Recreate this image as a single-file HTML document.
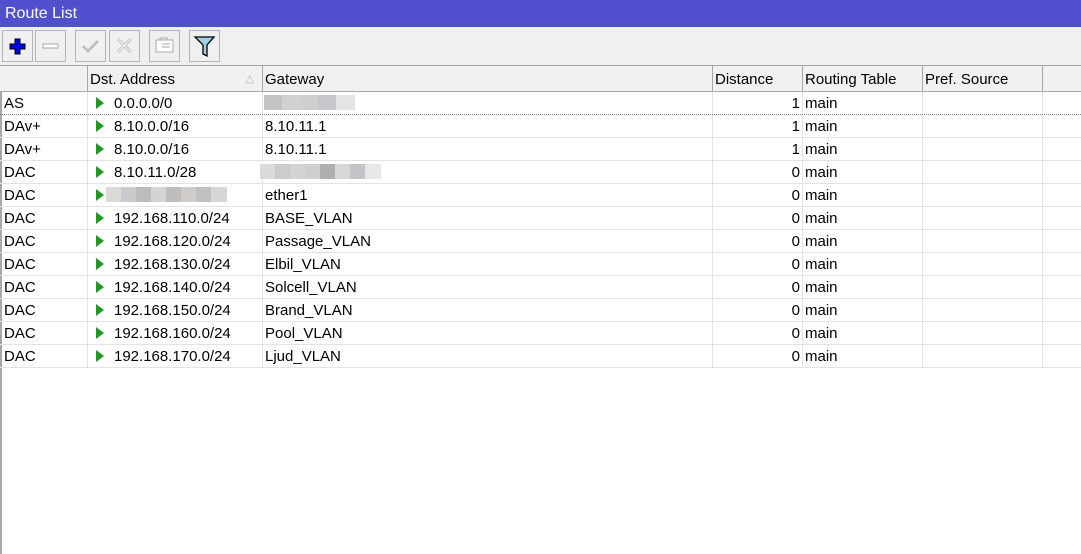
<!DOCTYPE html>
<html><head><meta charset="utf-8"><style>
*{margin:0;padding:0;box-sizing:border-box}
body{width:1081px;height:554px;overflow:hidden;background:#fff;font-family:"Liberation Sans",Arial,sans-serif;font-size:15px;color:#000;position:relative}
.a{position:absolute}
#title{left:0;top:0;width:1081px;height:27px;background:#5050cf;color:#fff;font-size:16px;line-height:27px;padding-left:5px}
#tb{left:0;top:27px;width:1081px;height:38px;background:#f0f0f0}
.btn{position:absolute;top:3px;width:31px;height:32px;border:1px solid #b4b4b4;background:#f0f0f0}
#hdr{left:0;top:65px;width:1081px;height:27px;background:#f0f0f0;border-top:1px solid #a8a8a8;border-bottom:1px solid #a8a8a8}
.hc{position:absolute;top:0;height:25px;line-height:27px;border-right:1px solid #a8a8a8;padding-left:2px}
.row{position:absolute;left:0;width:1081px;height:23px;border-bottom:1px solid #e3e3e3}
.c{position:absolute;top:0;height:22px;line-height:23px;border-right:1px solid #e3e3e3;padding-left:2px;white-space:nowrap}
.tri{position:absolute;left:8px;top:5px;width:0;height:0;border-left:8px solid #1f9a1f;border-top:6px solid transparent;border-bottom:6px solid transparent}
.blur{position:absolute;top:3px;height:15px}
</style></head><body>
<div class="a" id="title">Route List</div>
<div class="a" id="tb">
 <div class="btn" style="left:2px"><svg width="29" height="30"><path d="M12 8h5v5h5v5h-5v5h-5v-5h-5v-5h5z" fill="#0000ee" stroke="#000" stroke-width="1"/></svg></div>
 <div class="btn" style="left:35px"><svg width="29" height="30"><rect x="7" y="13" width="15" height="4" fill="#fff" stroke="#aaa"/></svg></div>
 <div class="btn" style="left:75px"><svg width="29" height="30"><path d="M7 15l5 5 10-10" fill="none" stroke="#bbb" stroke-width="2.5"/></svg></div>
 <div class="btn" style="left:109px"><svg width="29" height="30"><path d="M8 8l13 13M21 8L8 21" stroke="#bbb" stroke-width="3"/><path d="M8 8l13 13M21 8L8 21" stroke="#fff" stroke-width="1"/></svg></div>
 <div class="btn" style="left:149px"><svg width="29" height="30"><rect x="6" y="9" width="17" height="12" fill="#fff" stroke="#aaa"/><path d="M10 9v-2h7v2M12 13h8M12 16h8" stroke="#aaa" fill="none"/></svg></div>
 <div class="btn" style="left:189px"><svg width="29" height="30"><path d="M5 6h19l-7 8v11l-4-2v-9z" fill="#9fd0e8" stroke="#000" stroke-width="1.3"/></svg></div>
</div>
<div class="a" id="hdr">
 <div class="hc" style="left:0;width:88px"></div>
 <div class="hc" style="left:88px;width:175px">Dst. Address<span style="position:absolute;right:8px;top:0;color:#bbb;font-size:11px">△</span></div>
 <div class="hc" style="left:263px;width:450px">Gateway</div>
 <div class="hc" style="left:713px;width:90px">Distance</div>
 <div class="hc" style="left:803px;width:120px">Routing Table</div>
 <div class="hc" style="left:923px;width:120px">Pref. Source</div>
</div>
<div class="a" style="left:0;top:92px;width:2px;height:462px;background:#a8a8a8"></div>
<div id="rows"></div>
<script>
var d=[["AS","0.0.0.0/0","#B1","1"],["DAv+","8.10.0.0/16","8.10.11.1","1"],["DAv+","8.10.0.0/16","8.10.11.1","1"],["DAC","8.10.11.0/28","#B2","0"],["DAC","#B3","ether1","0"],
["DAC","192.168.110.0/24","BASE_VLAN","0"],["DAC","192.168.120.0/24","Passage_VLAN","0"],["DAC","192.168.130.0/24","Elbil_VLAN","0"],["DAC","192.168.140.0/24","Solcell_VLAN","0"],["DAC","192.168.150.0/24","Brand_VLAN","0"],["DAC","192.168.160.0/24","Pool_VLAN","0"],["DAC","192.168.170.0/24","Ljud_VLAN","0"]];
function blur(x,w,cols){var s="",n=cols.length,bw=w/n;for(var i=0;i<n;i++)s+='<div class="blur" style="left:'+(x+i*bw)+'px;width:'+(bw+0.5)+'px;background:'+cols[i]+'"></div>';return s}
var h="";
d.forEach(function(r,i){
 var top=92+i*23;
 var st=i==0?'border-bottom:1px dotted #888;':'';
 h+='<div class="row" style="top:'+top+'px;'+st+'">';
 h+='<div class="c" style="left:2px;width:86px">'+r[0]+'</div>';
 h+='<div class="c" style="left:88px;width:175px"><div class="tri"></div>';
 if(r[1]=="#B3") h+=blur(18,120,["#ddd9d7","#c9cbce","#bdbcba","#d4d4d6","#bebdbd","#d0ccca","#bfc0c3","#d6d6d6"]);
 else h+='<span style="position:absolute;left:26px">'+r[1]+'</span>';
 h+='</div>';
 h+='<div class="c" style="left:263px;width:450px">';
 if(r[2]=="#B1") h+=blur(1,90,["#c4c3c2","#d3d1cf","#cfcfcf","#c6c7ca","#e4e4e4"]);
 else if(r[2]=="#B2") h+=blur(-3,120,["#dadada","#cccccc","#d6d4d2","#cfcfcf","#b0aeb0","#d8d7d8","#c4c3c8","#e8e8e8"]);
 else h+=r[2];
 h+='</div>';
 h+='<div class="c" style="left:713px;width:90px;text-align:right;padding-right:2px">'+r[3]+'</div>';
 h+='<div class="c" style="left:803px;width:120px">main</div>';
 h+='<div class="c" style="left:923px;width:120px"></div>';
 h+='</div>';
});
document.getElementById("rows").innerHTML=h;
</script>
</body></html>
